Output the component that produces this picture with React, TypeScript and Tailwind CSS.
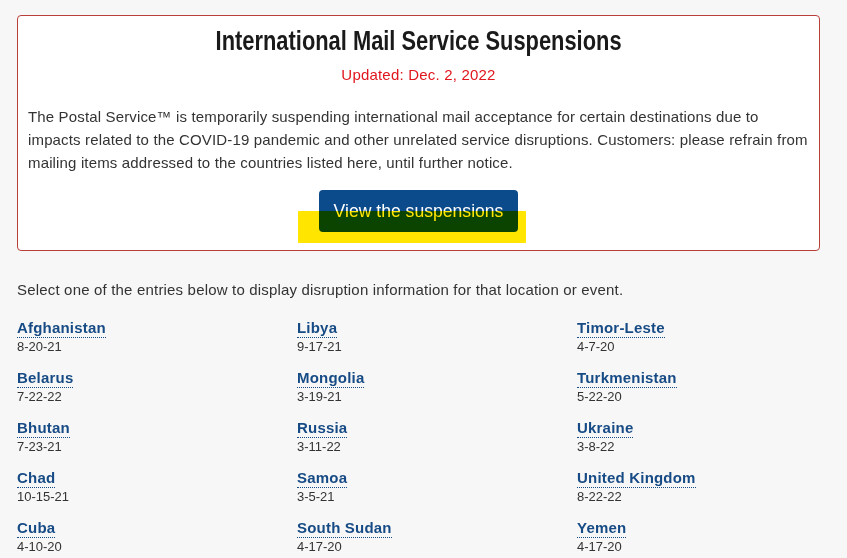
import type { ReactNode } from 'react';

type Entry = { name: string; date: string };

const ENTRIES: Entry[][] = [
  [
    { name: 'Afghanistan', date: '8-20-21' },
    { name: 'Libya', date: '9-17-21' },
    { name: 'Timor-Leste', date: '4-7-20' },
  ],
  [
    { name: 'Belarus', date: '7-22-22' },
    { name: 'Mongolia', date: '3-19-21' },
    { name: 'Turkmenistan', date: '5-22-20' },
  ],
  [
    { name: 'Bhutan', date: '7-23-21' },
    { name: 'Russia', date: '3-11-22' },
    { name: 'Ukraine', date: '3-8-22' },
  ],
  [
    { name: 'Chad', date: '10-15-21' },
    { name: 'Samoa', date: '3-5-21' },
    { name: 'United Kingdom', date: '8-22-22' },
  ],
  [
    { name: 'Cuba', date: '4-10-20' },
    { name: 'South Sudan', date: '4-17-20' },
    { name: 'Yemen', date: '4-17-20' },
  ],
];

function EntryLink({ children }: { children: ReactNode }) {
  return (
    <a
      href="#"
      className="text-[15px] font-bold leading-[19px] tracking-[0.2px] text-[#174b85] no-underline border-b border-dotted border-[#174b85]"
    >
      {children}
    </a>
  );
}

export default function App() {
  return (
    <div className="min-h-[558px] bg-[#f7f7f7] pt-[15px] pl-[17px] pr-[27px] font-['Liberation_Sans',Arial,sans-serif] text-[#333]">
      <div className="rounded-[4px] border border-[#b8403a] bg-white px-[10px] pt-[9px] pb-[18px]">
        <h1 className="text-center text-[27px] font-bold leading-[32px] text-[#1a1a1a]">
          <span className="inline-block scale-x-[0.81] whitespace-nowrap">International Mail Service Suspensions</span>
        </h1>
        <p className="mt-[9px] text-center text-[15px] leading-[17px] tracking-[0.2px] text-[#e0161e]">
          Updated: Dec. 2, 2022
        </p>
        <p className="mt-[22px] whitespace-nowrap text-[15px] leading-[23px] tracking-[0.15px]">
          The Postal Service™ is temporarily suspending international mail acceptance for certain destinations due to
          <br />
          impacts related to the COVID-19 pandemic and other unrelated service disruptions. Customers: please refrain from
          <br />
          mailing items addressed to the countries listed here, until further notice.
        </p>
        <div className="mt-[16px] flex justify-center">
          <div className="relative">
            <a
              href="#"
              className="flex h-[42px] w-[199px] items-center justify-center rounded-[4px] bg-[#0b4a8b] text-[17.6px] text-white no-underline"
            >
              View the suspensions
            </a>
            <span className="pointer-events-none absolute left-[-21px] top-[21px] h-[32px] w-[228px] bg-[#ffe500] mix-blend-multiply" />
          </div>
        </div>
      </div>

      <p className="mt-[30px] text-[15px] leading-[18px] tracking-[0.18px]">
        Select one of the entries below to display disruption information for that location or event.
      </p>

      <div className="mt-[19px] flex flex-col gap-[13px]">
        {ENTRIES.map((row, i) => (
          <div key={i} className="grid grid-cols-[280px_280px_1fr]">
            {row.map((e) => (
              <div key={e.name} className="flex flex-col items-start">
                <EntryLink>{e.name}</EntryLink>
                <span className="mt-[1px] text-[13px] leading-[16px] text-[#333]">{e.date}</span>
              </div>
            ))}
          </div>
        ))}
      </div>
    </div>
  );
}
